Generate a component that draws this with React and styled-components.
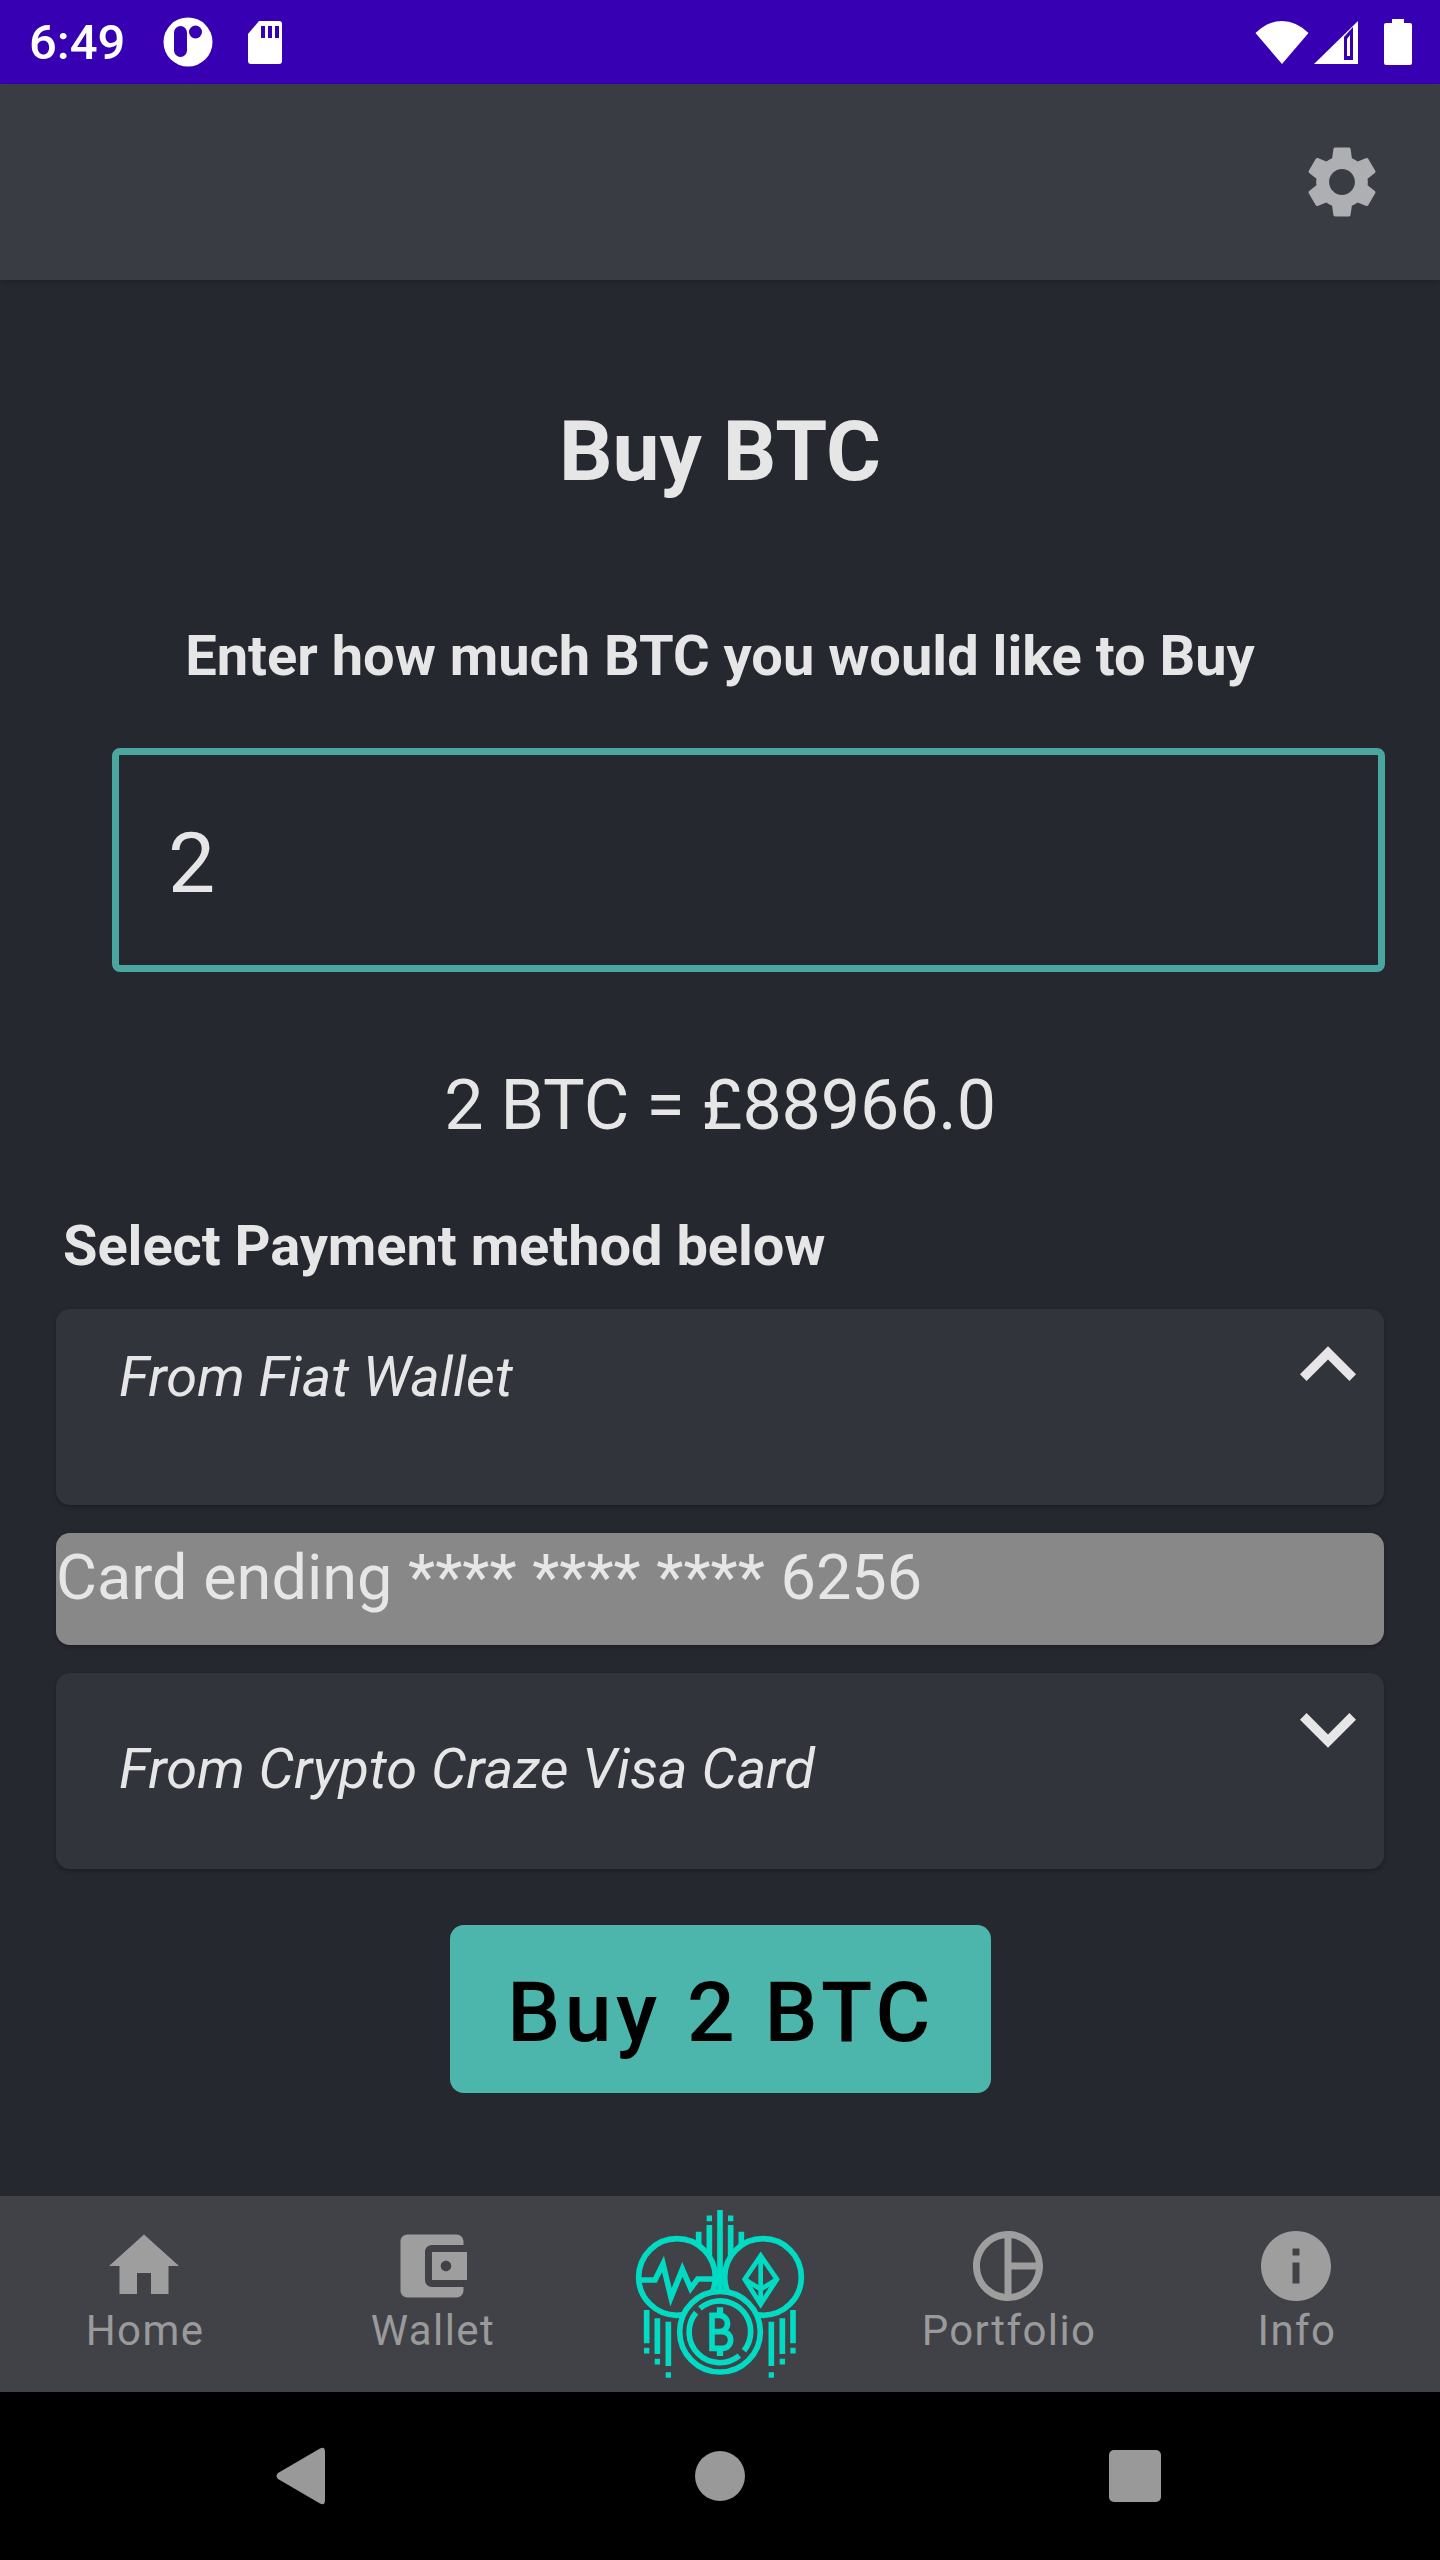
import React from "react";
import styled, { createGlobalStyle } from "styled-components";

const GlobalStyle = createGlobalStyle`
  html, body {
    margin: 0;
    padding: 0;
    background: #25282e;
  }
  * {
    box-sizing: border-box;
  }
`;

const MaterialIcon = ({ d, size, color }) => (
  <svg width={size} height={size} viewBox="0 0 24 24" fill={color}>
    <path d={d} />
  </svg>
);

const Logo = () => (
  <svg width="240" height="200" viewBox="0 0 720 600" fill="none" stroke="#00dcc4" strokeWidth="17">
    <circle cx="231" cy="261" r="115" />
    <circle cx="489" cy="261" r="115" />
    <path d="M360 60 V304" />
    <path d="M328 105 V199 M392 105 V199 M296 125 V166 M424 125 V166" />
    <path d="M120 270 H165 L189 222 L213 322 L247 238 L272 295 L293 267 H352" />
    <circle cx="360" cy="425" r="121" fill="#414248" />
    <path d="M482 197 L531 268 L482 343 L434 268 Z M482 197 V343 M434 268 L482 298 L531 268" strokeWidth="14" />
    <path d="M140 360 V460 M172 385 V492 M205 395 V528 M579 360 V460 M547 385 V492 M514 395 V528" />
    <path d="M132 482 H148 M164 515 H180 M197 555 H213 M571 482 H587 M539 515 H555 M506 555 H522 M320 85 H336 M384 85 H400" />
    <path d="M300 355 A92 92 0 0 1 452 425 A92 92 0 0 1 432 482" />
    <path d="M288 368 A92 92 0 0 0 418 497" />
    <path d="M328 376 H358 A24.500 24.500 0 0 1 358 425 H336 M358 425 H367 A25 25 0 0 1 367 475 H328 M336 368 V483" />
    <path d="M360 352 V376 M360 475 V498" strokeWidth="19" />
  </svg>
);

const tabs = [
  { label: "Home", d: "M10 20v-6h4v6h5v-8h3L12 3 2 12h3v8z" },
  {
    label: "Wallet",
    d: "M21 18v1c0 1.1-.9 2-2 2H5c-1.11 0-2-.9-2-2V5c0-1.1.89-2 2-2h14c1.1 0 2 .9 2 2v1h-9c-1.11 0-2 .9-2 2v8c0 1.1.89 2 2 2h9zm-9-2h10V8H12v8zm4-2.5c-.83 0-1.5-.67-1.5-1.5s.67-1.5 1.5-1.5 1.5.67 1.5 1.5-.67 1.5-1.5 1.5z",
  },
  { logo: true },
  {
    label: "Portfolio",
    d: "M12 2C6.48 2 2 6.48 2 12s4.48 10 10 10 10-4.48 10-10S17.52 2 12 2zm7.93 9H13V4.07c3.61.45 6.48 3.32 6.93 6.93zM4 12c0-4.07 3.06-7.44 7-7.93v15.86c-3.94-.49-7-3.86-7-7.93zm9 7.93V13h6.93c-.45 3.61-3.32 6.48-6.93 6.93z",
  },
  {
    label: "Info",
    d: "M12 2C6.48 2 2 6.48 2 12s4.48 10 10 10 10-4.48 10-10S17.52 2 12 2zm1 15h-2v-6h2v6zm0-8h-2V7h2v2z",
  },
];

export default function App() {
  return (
    <Screen>
      <GlobalStyle />
      <StatusBar>
        <StatusGroup>
          <Clock>6:49</Clock>
          <svg width="50" height="50" viewBox="0 0 50 50">
            <circle cx="25" cy="25" r="24.5" fill="#fff" />
            <rect x="11" y="9" width="13" height="31" rx="6.5" fill="#3800b3" />
            <circle cx="32.500" cy="15" r="6.5" fill="#3800b3" />
          </svg>
          <svg width="36" height="45" viewBox="0 0 36 45">
            <path d="M12 1H32a3 3 0 0 1 3 3V41a3 3 0 0 1-3 3H4a3 3 0 0 1-3-3V14z" fill="#fff" />
            <path d="M14 6h4v12h-4zM21 6h4v12h-4zM28 6h4v12h-4z" fill="#3800b3" />
          </svg>
        </StatusGroup>
        <StatusGroup $right>
          <svg width="54" height="45" viewBox="0 0 54 45">
            <path d="M27 44 L0.5 13 Q13 1 27 1 Q41 1 53.5 13 Z" fill="#fff" />
          </svg>
          <svg width="46" height="45" viewBox="0 0 46 45">
            <path d="M45 1V44H1Z" fill="#fff" />
            <path d="M31 17L40 7V40H31Z" fill="#3800b3" />
            <path d="M34 19L37 15V36H34Z" fill="#fff" />
          </svg>
          <svg width="28" height="46" viewBox="0 0 28 46">
            <path d="M8 0H20V4H26a2 2 0 0 1 2 2V44a2 2 0 0 1-2 2H2a2 2 0 0 1-2-2V6a2 2 0 0 1 2-2H8z" fill="#fff" />
          </svg>
        </StatusGroup>
      </StatusBar>

      <AppBar>
        <MaterialIcon
          size={86}
          color="#aeafb2"
          d="M19.14 12.94c.04-.3.06-.61.06-.94 0-.32-.02-.64-.07-.94l2.03-1.58c.18-.14.23-.41.12-.61l-1.92-3.32c-.12-.22-.37-.29-.59-.22l-2.39.96c-.5-.38-1.03-.7-1.62-.94l-.36-2.54c-.04-.24-.24-.41-.48-.41h-3.84c-.24 0-.43.17-.47.41l-.36 2.54c-.59.24-1.13.57-1.62.94l-2.39-.96c-.22-.08-.47 0-.59.22L2.74 8.87c-.12.21-.08.47.12.61l2.03 1.58c-.05.3-.09.63-.09.94s.02.64.07.94l-2.03 1.58c-.18.14-.23.41-.12.61l1.92 3.32c.12.22.37.29.59.22l2.39-.96c.5.38 1.03.7 1.62.94l.36 2.54c.05.24.24.41.48.41h3.84c.24 0 .44-.17.47-.41l.36-2.54c.59-.24 1.13-.56 1.62-.94l2.39.96c.22.08.47 0 .59-.22l1.92-3.32c.12-.22.07-.47-.12-.61l-2.01-1.58zM12 15.6c-1.98 0-3.6-1.62-3.6-3.6s1.62-3.6 3.6-3.6 3.6 1.62 3.6 3.6-1.62 3.6-3.6 3.6z"
        />
      </AppBar>

      <Main>
        <Title>Buy BTC</Title>
        <Subtitle>Enter how much BTC you would like to Buy</Subtitle>
        <AmountBox>2</AmountBox>
        <Conversion>2 BTC = £88966.0</Conversion>
        <SectionLabel>Select Payment method below</SectionLabel>
        <PaymentCard $gap={13}>
          <PaymentName $top={36}>From Fiat Wallet</PaymentName>
          <MaterialIcon size={112} color="#e6e6e7" d="M12 8l-6 6 1.41 1.41L12 10.83l4.59 4.58L18 14z" />
        </PaymentCard>
        <CardOption>Card ending **** **** **** 6256</CardOption>
        <PaymentCard $gap={28}>
          <PaymentName $top={64}>From Crypto Craze Visa Card</PaymentName>
          <MaterialIcon size={112} color="#e6e6e7" d="M16.59 8.59L12 13.17 7.41 8.59 6 10l6 6 6-6z" />
        </PaymentCard>
        <BuyButton>Buy 2 BTC</BuyButton>
      </Main>

      <BottomNav>
        {tabs.map((tab, i) =>
          tab.logo ? (
            <LogoTab key={i}>
              <Logo />
            </LogoTab>
          ) : (
            <Tab key={tab.label}>
              <MaterialIcon size={84} color="#9e9e9e" d={tab.d} />
              <TabLabel>{tab.label}</TabLabel>
            </Tab>
          )
        )}
      </BottomNav>

      <SystemNav>
        <svg width="50" height="58" viewBox="0 0 50 58">
          <path d="M2 26L44 1.500Q49 -1 49 5V53Q49 59 44 56.500L2 32Q-1 29 2 26Z" fill="#999" />
        </svg>
        <HomeDot />
        <RecentSquare />
      </SystemNav>
    </Screen>
  );
}

const Screen = styled.div`
  display: flex;
  flex-direction: column;
  width: 1440px;
  height: 2560px;
  overflow: hidden;
  background: #25282e;
  font-family: Roboto, sans-serif;
  color: #e6e6e7;
`;
const StatusBar = styled.div`
  display: flex;
  flex: none;
  justify-content: space-between;
  align-items: center;
  height: 84px;
  padding: 0 28px 0 29px;
  background: #3800b3;
`;
const StatusGroup = styled.div`
  display: flex;
  align-items: center;
  gap: ${(p) => (p.$right ? "4px" : "34px")};
  svg:last-child {
    margin-left: ${(p) => (p.$right ? "21px" : "0")};
  }
`;
const Clock = styled.div`
  width: 100px;
  font-size: 49px;
  font-weight: 500;
  color: #fff;
`;
const AppBar = styled.div`
  display: flex;
  flex: none;
  justify-content: flex-end;
  align-items: center;
  height: 196px;
  padding-right: 55px;
  background: #3a3c44;
  box-shadow: 0 2px 6px rgba(0, 0, 0, 0.2);
`;
const Main = styled.div`
  display: flex;
  flex: 1;
  flex-direction: column;
  align-items: flex-start;
  min-height: 0;
`;
const Title = styled.div`
  width: 100%;
  margin-top: 122px;
  font-size: 84px;
  font-weight: 700;
  line-height: 100px;
  text-align: center;
`;
const Subtitle = styled.div`
  width: 100%;
  margin-top: 104px;
  font-size: 56px;
  font-weight: 700;
  line-height: 100px;
  text-align: center;
`;
const AmountBox = styled.div`
  display: flex;
  align-items: center;
  width: 1273px;
  height: 224px;
  margin: 42px 0 0 112px;
  padding: 6px 0 0 49px;
  border: 7px solid #4aa79f;
  border-radius: 8px;
  font-size: 84px;
`;
const Conversion = styled.div`
  width: 100%;
  margin-top: 83px;
  font-size: 70px;
  line-height: 100px;
  letter-spacing: -0.15px;
  text-align: center;
`;
const SectionLabel = styled.div`
  margin: 41px 0 0 63px;
  font-size: 56px;
  font-weight: 700;
  line-height: 100px;
  letter-spacing: -0.05px;
`;
const PaymentCard = styled.div`
  display: flex;
  justify-content: space-between;
  align-items: flex-start;
  width: 1328px;
  height: 196px;
  margin: ${(p) => p.$gap}px 0 0 56px;
  padding-left: 63px;
  background: #31343b;
  border-radius: 14px;
  box-shadow: 0 2px 4px rgba(0, 0, 0, 0.25);
`;
const PaymentName = styled.div`
  margin-top: ${(p) => p.$top}px;
  font-size: 56px;
  font-style: italic;
  line-height: 64px;
`;
const CardOption = styled.div`
  width: 1328px;
  height: 112px;
  margin: 28px 0 0 56px;
  background: #888888;
  border-radius: 14px;
  box-shadow: 0 2px 4px rgba(0, 0, 0, 0.25);
  font-size: 63px;
  line-height: 90px;
`;
const BuyButton = styled.div`
  display: flex;
  justify-content: center;
  align-items: center;
  align-self: center;
  width: 541px;
  height: 168px;
  margin-top: 56px;
  padding: 6px 0 0 2px;
  background: #4db6ac;
  border-radius: 14px;
  color: #000;
  font-size: 84px;
  font-weight: 500;
  letter-spacing: 4.5px;
`;
const BottomNav = styled.div`
  display: grid;
  flex: none;
  grid-template-columns: repeat(5, 288px);
  height: 196px;
  background: #414248;
`;
const Tab = styled.div`
  display: flex;
  flex-direction: column;
  align-items: center;
  padding-top: 28px;
`;
const LogoTab = styled.div`
  display: flex;
  justify-content: center;
  margin-top: -6px;
`;
const TabLabel = styled.div`
  margin: -2px 0 0 2px;
  color: #9a9a9a;
  font-size: 42px;
  line-height: 50px;
  letter-spacing: 1.4px;
`;
const SystemNav = styled.div`
  display: flex;
  flex: none;
  align-items: center;
  height: 168px;
  padding-left: 276px;
  background: #000;
`;
const HomeDot = styled.div`
  width: 50px;
  height: 50px;
  margin-left: 369px;
  border-radius: 50%;
  background: #999;
`;
const RecentSquare = styled.div`
  width: 52px;
  height: 52px;
  margin-left: 364px;
  border-radius: 5px;
  background: #999;
`;
